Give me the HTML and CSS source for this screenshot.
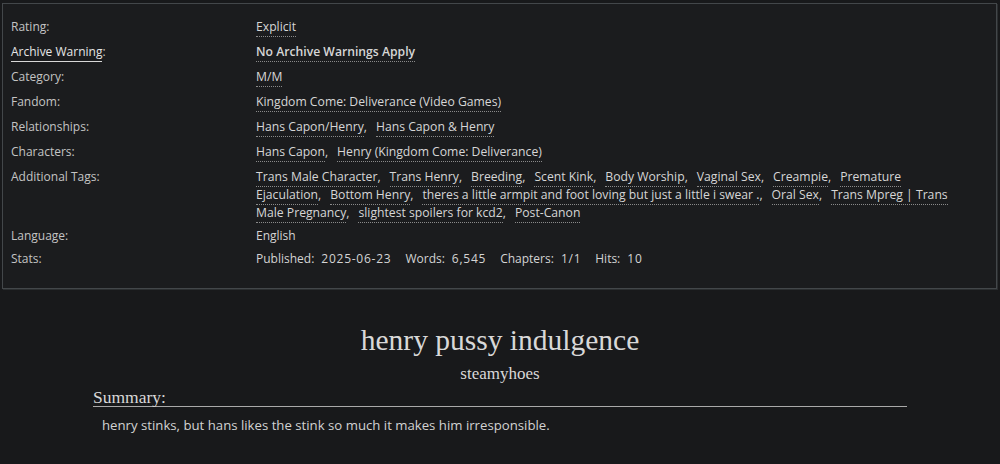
FILE: index.html
```html
<!DOCTYPE html>
<html lang="en">
<head>
<meta charset="utf-8">
<title>henry pussy indulgence</title>
<link rel="stylesheet" href="styles.css">
</head>
<body>
<div class="wrapper">
  <dl class="meta">
    <dt>Rating:</dt>
    <dd class="linked"><ul class="tags"><li><a href="#">Explicit</a></li></ul></dd>
    <dt><a class="help" href="#">Archive Warning</a>:</dt>
    <dd class="linked"><ul class="tags"><li><a class="strong" href="#">No Archive Warnings Apply</a></li></ul></dd>
    <dt>Category:</dt>
    <dd class="linked"><ul class="tags"><li><a href="#">M/M</a></li></ul></dd>
    <dt>Fandom:</dt>
    <dd class="linked"><ul class="tags"><li><a href="#">Kingdom Come: Deliverance (Video Games)</a></li></ul></dd>
    <dt>Relationships:</dt>
    <dd class="linked"><ul class="tags commas"><li><a href="#">Hans Capon/Henry</a></li><li><a href="#">Hans Capon &amp; Henry</a></li></ul></dd>
    <dt>Characters:</dt>
    <dd class="linked"><ul class="tags commas"><li><a href="#">Hans Capon</a></li><li><a href="#">Henry (Kingdom Come: Deliverance)</a></li></ul></dd>
    <dt>Additional Tags:</dt>
    <dd class="linked multi"><ul class="tags commas"><li><a href="#">Trans Male Character</a></li><li><a href="#">Trans Henry</a></li><li><a href="#">Breeding</a></li><li><a href="#">Scent Kink</a></li><li><a href="#">Body Worship</a></li><li><a href="#">Vaginal Sex</a></li><li><a href="#">Creampie</a></li><li><a href="#">Premature Ejaculation</a></li><li><a href="#">Bottom Henry</a></li><li><a href="#">theres a little armpit and foot loving but just a little i swear .</a></li><li><a href="#">Oral Sex</a></li><li><a href="#">Trans Mpreg | Trans Male Pregnancy</a></li><li><a href="#">slightest spoilers for kcd2</a></li><li><a href="#">Post-Canon</a></li></ul></dd>
    <dt>Language:</dt>
    <dd>English</dd>
    <dt>Stats:</dt>
    <dd>
      <dl class="stats">
        <dt>Published:</dt><dd>2025-06-23</dd>
        <dt>Words:</dt><dd>6,545</dd>
        <dt>Chapters:</dt><dd>1/1</dd>
        <dt>Hits:</dt><dd>10</dd>
      </dl>
    </dd>
  </dl>
</div>
<div class="preface">
  <h2 class="title">henry pussy indulgence</h2>
  <h3 class="byline">steamyhoes</h3>
  <div class="summary">
    <h3 class="heading">Summary:</h3>
    <blockquote class="userstuff"><p>henry stinks, but hans likes the stink so much it makes him irresponsible.</p></blockquote>
  </div>
</div>
</body>
</html>
```
FILE: styles.css
```css
html, body {
  margin: 0;
  padding: 0;
  background: #18191b;
  color: #cfcfcf;
  font-family: "Open Sans", "Noto Sans", sans-serif;
  font-size: 12px;
  line-height: 18px;
}

.wrapper {
  margin: 3px 3px 0 2px;
  border: 1px solid #43474a;
  box-shadow: 1px 1px 0 #2b2e30;
  background: #1b1c1e;
  padding: 14px 8px 20px 8px;
}

.meta {
  margin: 0;
  display: grid;
  grid-template-columns: 245px 1fr;
  row-gap: 5px;
}

.meta > dt {
  margin: 0;
  color: #c4c4c4;
}

.meta > dd {
  margin: 0;
  color: #d4d4d4;
}

.meta > dd.linked {
  padding-bottom: 2px;
  font-size: 12.2px;
}

.meta > dd.multi {
  padding-bottom: 0;
  padding-right: 30px;
}

.help {
  color: #e6e6e6;
  text-decoration: none;
  border-bottom: 1px solid #d8d8d8;
  padding-bottom: 1px;
}

.tags {
  list-style: none;
  margin: 0;
  padding: 0;
}

.tags li {
  display: inline;
}

.commas li::after {
  content: ",";
  margin-right: 9px;
}

.commas li:last-child::after {
  content: "";
  margin: 0;
}

.tags a {
  color: #d6d6d6;
  text-decoration: none;
  border-bottom: 1px dotted #8a8a8a;
  padding-bottom: 1px;
}

.tags a.strong {
  font-weight: 600;
}

.stats {
  margin: 0;
  display: flex;
  flex-wrap: wrap;
}

.stats dt {
  margin: 0 7px 0 0;
}

.stats dd {
  margin: 0 14px 0 0;
  letter-spacing: 0.75px;
}

.preface {
  margin: 0;
  padding-top: 34px;
  text-align: center;
  font-family: "Liberation Serif", "Times New Roman", serif;
  color: #d8d8d8;
}

.title {
  margin: 0;
  font-size: 29.5px;
  line-height: 34px;
  font-weight: normal;
}

.byline {
  margin: 7px 0 0 0;
  font-size: 17px;
  line-height: 20px;
  font-weight: normal;
}

.summary {
  margin: 4px 93px 0 93px;
  text-align: left;
}

.summary .heading {
  margin: 0;
  font-size: 17.5px;
  line-height: 18px;
  font-weight: normal;
  border-bottom: 1px solid #a9a9a9;
}

.userstuff {
  margin: 9px 0 0 9px;
  font-family: "Open Sans", "Noto Sans", sans-serif;
  font-size: 13.2px;
  line-height: 18px;
  color: #d2d2d2;
}

.userstuff p {
  margin: 0;
}
```
